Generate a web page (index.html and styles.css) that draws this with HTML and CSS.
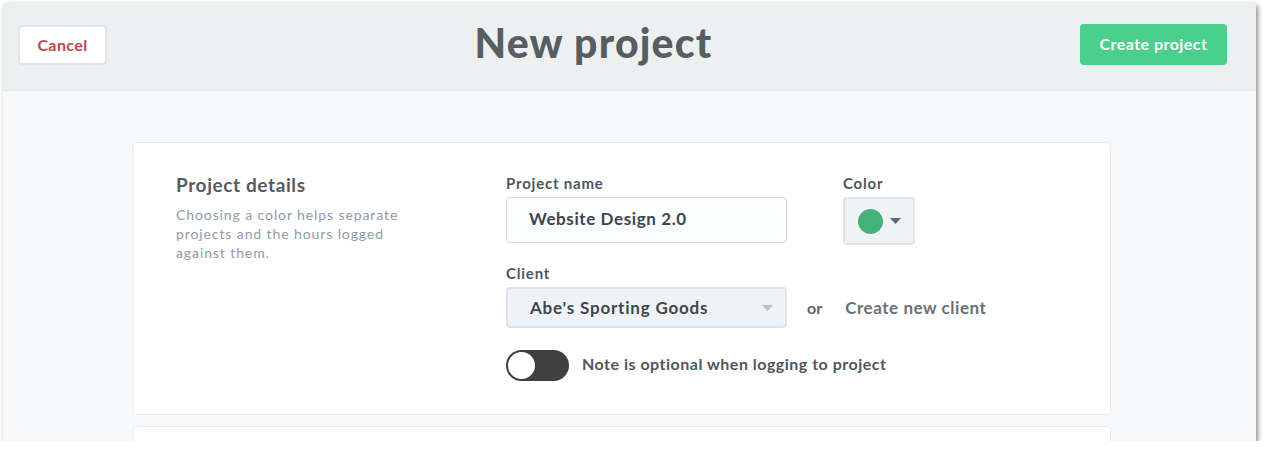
FILE: index.html
```html
<!DOCTYPE html>
<html>
<head>
<meta charset="utf-8">
<link rel="stylesheet" href="styles.css">
</head>
<body>
<div class="window">
  <header class="topbar">
    <button class="btn-cancel">Cancel</button>
    <h1 class="title">New project</h1>
    <button class="btn-create">Create project</button>
  </header>
  <main class="content">
    <section class="card">
      <div class="intro">
        <h2 class="intro-title">Project details</h2>
        <p class="intro-text">Choosing a color helps separate projects and the hours logged against them.</p>
      </div>
      <div class="form">
        <div class="row">
          <div class="field field-name">
            <label class="label">Project name</label>
            <div class="input">Website Design 2.0</div>
          </div>
          <div class="field field-color">
            <label class="label">Color</label>
            <div class="color-picker">
              <span class="swatch"></span>
              <svg class="caret" width="11" height="6" viewBox="0 0 11 6"><path d="M0 0h11L5.5 6z" fill="#5f6b73"/></svg>
            </div>
          </div>
        </div>
        <div class="field field-client">
          <label class="label">Client</label>
          <div class="client-row">
            <div class="select">
              <span>Abe's Sporting Goods</span>
              <svg class="caret" width="11" height="6" viewBox="0 0 11 6"><path d="M0 0h11L5.5 6z" fill="#b7c0c7"/></svg>
            </div>
            <span class="or">or</span>
            <span class="new-client">Create new client</span>
          </div>
        </div>
        <div class="toggle-row">
          <span class="toggle"><span class="knob"></span></span>
          <span class="toggle-label">Note is optional when logging to project</span>
        </div>
      </div>
    </section>
    <section class="card card-next"></section>
  </main>
</div>
</body>
</html>
```

FILE: styles.css
```css
* { box-sizing: border-box; }
html, body { margin: 0; padding: 0; background: #ffffff; }
body {
  font-family: Lato, "Open Sans", sans-serif;
  padding: 3px 0 0 3px;
}
.window {
  width: 1253px;
  height: 438px;
  overflow: hidden;
  background: #f7f8f9;
  border-radius: 4px 2px 0 0;
  box-shadow: 2px 2px 5px rgba(0,0,0,0.45);
}
.topbar {
  height: 88px;
  background: #edf0f1;
  border-bottom: 1px solid #e3e7ea;
  display: flex;
  align-items: center;
  justify-content: space-between;
  padding: 0 29px 4px 15px;
}
.btn-cancel {
  width: 89px;
  height: 40px;
  background: #ffffff;
  border: 2px solid #e0e6ec;
  border-radius: 4px;
  color: #c1464b;
  font-family: inherit;
  font-size: 16px;
  font-weight: 700;
  letter-spacing: 0.4px;
  padding: 0 0 2px;
  margin-top: 1px;
}
.title {
  margin: 0 0 4px;
  font-size: 41px;
  font-weight: 900;
  color: #575e62;
  letter-spacing: 1.2px;
}
.btn-create {
  width: 147px;
  height: 41px;
  background: #4bcf8c;
  border: none;
  border-radius: 4px;
  color: #ffffff;
  font-family: inherit;
  font-size: 16px;
  font-weight: 700;
  letter-spacing: 0.45px;
  padding: 0 0 2px;
}
.content {
  padding: 51px 0 0 129px;
}
.card {
  width: 979px;
  height: 273px;
  background: #ffffff;
  border: 1px solid #e8ebee;
  border-radius: 5px;
  display: flex;
  padding: 31px 0 0 43px;
}
.card-next {
  margin-top: 11px;
  height: 60px;
}
.intro { width: 330px; }
.intro-title {
  margin: 0;
  font-size: 19px;
  font-weight: 700;
  color: #555c60;
  line-height: 22px;
  letter-spacing: 0.6px;
}
.intro-text {
  margin: 9px 0 0;
  font-size: 14px;
  line-height: 19px;
  color: #8d9ca5;
  width: 240px;
  letter-spacing: 0.9px;
}
.form { display: flex; flex-direction: column; }
.row { display: flex; gap: 56px; }
.label {
  display: block;
  font-size: 15px;
  font-weight: 700;
  color: #4f575c;
  line-height: 18px;
  margin-top: 0;
  letter-spacing: 0.8px;
}
.input {
  margin-top: 5px;
  width: 281px;
  height: 46px;
  border: 1px solid #cfd6dc;
  border-radius: 4px;
  background: #fbfcfd;
  padding: 0 0 3px 22px;
  display: flex;
  align-items: center;
  font-size: 17px;
  font-weight: 700;
  color: #3e474e;
  letter-spacing: 0.6px;
}
.color-picker {
  margin-top: 5px;
  width: 72px;
  height: 48px;
  background: #f0f3f6;
  border: 2px solid #dfe5ea;
  border-radius: 4px;
  display: flex;
  align-items: center;
  padding-left: 13px;
  gap: 7px;
}
.swatch {
  width: 25px;
  height: 25px;
  border-radius: 50%;
  background: #46b07a;
}
.field-client { margin-top: 19px; }
.client-row { display: flex; align-items: center; margin-top: 5px; }
.select {
  width: 281px;
  height: 41px;
  background: #eff3f8;
  border: 2px solid #dde4ec;
  border-radius: 4px;
  display: flex;
  align-items: center;
  justify-content: space-between;
  padding: 0 12px 0 22px;
  font-size: 17px;
  font-weight: 700;
  color: #3e474e;
  letter-spacing: 0.8px;
}
.or {
  margin-left: 20px;
  font-size: 16px;
  font-weight: 700;
  color: #5e666b;
}
.new-client {
  margin-left: 23px;
  font-size: 17px;
  font-weight: 700;
  color: #6a7175;
  letter-spacing: 0.55px;
}
.toggle-row {
  display: flex;
  align-items: center;
  margin-top: 22px;
}
.toggle {
  width: 63px;
  height: 31px;
  border-radius: 16px;
  background: #404040;
  display: flex;
  align-items: center;
  padding-left: 2px;
}
.knob {
  width: 27px;
  height: 27px;
  border-radius: 50%;
  background: #ffffff;
}
.toggle-label {
  margin-left: 13px;
  font-size: 16px;
  font-weight: 700;
  color: #4f575c;
  margin-top: -5px;
  letter-spacing: 0.5px;
}
```
